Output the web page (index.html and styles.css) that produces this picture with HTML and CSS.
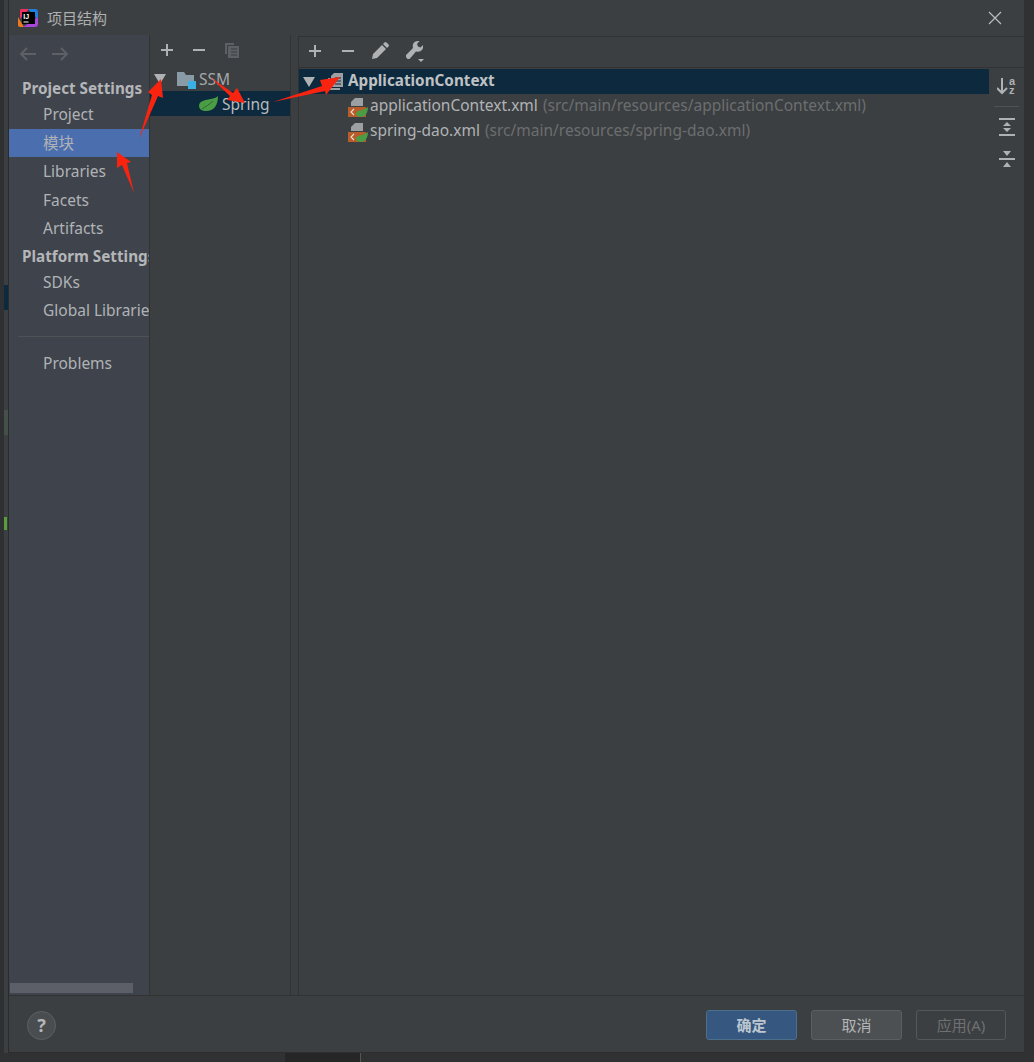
FILE: index.html
```html
<!DOCTYPE html>
<html lang="en">
<head>
    <meta charset="UTF-8">
    <title>项目结构</title>
    <link rel="stylesheet" href="styles.css">
</head>
<body>
    <!-- Editor behind the dialog, only its edges show -->
    <div class="edge-left">
        <span class="edge-mark edge-blue"></span>
        <span class="edge-mark edge-olive"></span>
        <span class="edge-mark edge-green"></span>
    </div>

    <div class="window">
        <div class="title-bar">
            <svg class="app-icon" width="20" height="20" viewBox="0 0 20 20">
                <path d="M3 1h8L2 11V3q0-2 1-2z" fill="#f2305f"/>
                <path d="M10 1h7q3 0 3 3v8z" fill="#1f7fe0"/>
                <path d="M0 9l6 10H2q-2 0-2-2z" fill="#f0781c"/>
                <path d="M5 19h12q3 0 3-3v-7z" fill="#a746d8"/>
                <rect x="4" y="4" width="13" height="12" fill="#000"/>
                <rect x="5.500" y="13.500" width="5" height="1" fill="#fff"/>
                <text x="5.300" y="11" class="logo-letters">IJ</text>
            </svg>
            <span class="title-text">项目结构</span>
            <svg class="close-icon" width="14" height="14" viewBox="0 0 14 14">
                <path d="M1 1l12 12M13 1L1 13" stroke="#bbbdbe" stroke-width="1.200" fill="none"/>
            </svg>
        </div>

        <div class="content">
            <!-- Left settings navigation -->
            <div class="sidebar">
                <div class="nav-arrows">
                    <svg width="18" height="14" viewBox="0 0 18 14"><path d="M17 7H2M8 1L2 7l6 6" stroke="#5d6165" stroke-width="2" fill="none"/></svg>
                    <svg width="18" height="14" viewBox="0 0 18 14"><path d="M1 7h15M10 1l6 6-6 6" stroke="#5d6165" stroke-width="2" fill="none"/></svg>
                </div>
                <div class="nav-head nav-head-first">Project Settings</div>
                <div class="nav-item nav-project">Project</div>
                <div class="nav-item nav-active">模块</div>
                <div class="nav-item">Libraries</div>
                <div class="nav-item">Facets</div>
                <div class="nav-item">Artifacts</div>
                <div class="nav-head">Platform Settings</div>
                <div class="nav-item nav-sdk">SDKs</div>
                <div class="nav-item">Global Libraries</div>
                <div class="nav-sep"></div>
                <div class="nav-item">Problems</div>
                <div class="side-scroll"></div>
            </div>

            <!-- Module tree -->
            <div class="module-panel">
                <div class="toolbar module-toolbar">
                    <svg width="14" height="14" viewBox="0 0 14 14"><path d="M7 1v12M1 7h12" stroke="#afb1b3" stroke-width="2"/></svg>
                    <svg width="14" height="14" viewBox="0 0 14 14"><path d="M1 7h12" stroke="#afb1b3" stroke-width="2"/></svg>
                    <svg class="copy-icon" width="16" height="16" viewBox="0 0 16 16"><path d="M1 1h9v2H3v9H1z" fill="#5d6165"/><path d="M4 4h11v12H4z" fill="#5d6165"/><path d="M7 7h6M7 10h6M7 13h6" stroke="#3c3f41" stroke-width="1.200"/></svg>
                </div>
                <div class="tree-row">
                    <svg class="tree-arrow" width="12" height="10" viewBox="0 0 12 10"><path d="M0 0h12L6 10z" fill="#afb1b3"/></svg>
                    <svg class="ssm-icon" width="20" height="18" viewBox="0 0 20 18"><path d="M1 1h7l2 3h8v11H1z" fill="#8a9ba8"/><rect x="12" y="10" width="8" height="8" fill="#3ab0e6"/></svg>
                    <span>SSM</span>
                </div>
                <div class="tree-row tree-selected">
                    <svg class="leaf-icon" width="19" height="15" viewBox="0 0 19 15"><path d="M19 0C19 9 15 15 7 15 3 15 0 13 0 10 0 4 8 4 12 3 15 2.500 17 2 19 0z" fill="#4a9c45"/><path d="M3 13C7 10 10 9 14 5" stroke="#2f6c32" stroke-width="1" fill="none"/></svg>
                    <span>Spring</span>
                </div>
            </div>

            <div class="splitter"></div>

            <!-- Spring context tree -->
            <div class="main-panel">
                <div class="toolbar main-toolbar">
                    <svg width="14" height="14" viewBox="0 0 14 14"><path d="M7 1v12M1 7h12" stroke="#afb1b3" stroke-width="2"/></svg>
                    <svg width="14" height="14" viewBox="0 0 14 14"><path d="M1 7h12" stroke="#afb1b3" stroke-width="2"/></svg>
                    <svg width="18" height="18" viewBox="0 0 18 18"><path d="M1 17l1-5L11 3l4 4-9 9zM12 2l1.500-1.500q1-1 2 0l2 2q1 1 0 2L16 6z" fill="#afb1b3"/></svg>
                    <svg class="wrench-icon" width="19" height="22" viewBox="0 0 19 22"><path d="M1 15l7-7Q7 4 9.500 2 12 .5 14.500 1L12 4l1 2.500 2.500 1L18 5q.5 2.500-1 5-2 2.500-6 1.500L5 18.500q-1.500 1-3 0T1 15z" fill="#afb1b3"/><path d="M13 19h6l-3 3z" fill="#afb1b3"/></svg>
                </div>
                <div class="main-body">
                    <div class="context-tree">
                        <div class="ctx-row ctx-selected">
                            <svg class="tree-arrow" width="12" height="10" viewBox="0 0 12 10"><path d="M0 0h12L6 10z" fill="#afb1b3"/></svg>
                            <svg class="stack-icon" width="16" height="18" viewBox="0 0 16 18"><path d="M7 0h9v14H4V3z" fill="#9da0a2"/><path d="M1 5h2v10h10v2H1z" fill="#9da0a2"/><path d="M8 5h6M8 8h6M8 11h6" stroke="#0d293e" stroke-width="1"/></svg>
                            <span class="ctx-name">ApplicationContext</span>
                        </div>
                        <div class="ctx-row ctx-file">
                            <svg class="xml-icon" width="20" height="20" viewBox="0 0 20 20">
                                <path d="M3 9V5l4-4h8v8z" fill="#9da0a2"/>
                                <rect x="0" y="10" width="18" height="10" fill="#b85c2a"/>
                                <path d="M6 12l-3 3 3 3" stroke="#e8e0d8" stroke-width="1.100" fill="none"/>
                                <path d="M20 10c0 6-3 10-7 10-3 0-5-1-5-3 0-4 7-3 12-7z" fill="#4a9c45"/>
                            </svg>
                            <span>applicationContext.xml</span>
                            <span class="ctx-path">(src/main/resources/applicationContext.xml)</span>
                        </div>
                        <div class="ctx-row ctx-file">
                            <svg class="xml-icon" width="20" height="20" viewBox="0 0 20 20">
                                <path d="M3 9V5l4-4h8v8z" fill="#9da0a2"/>
                                <rect x="0" y="10" width="18" height="10" fill="#b85c2a"/>
                                <path d="M6 12l-3 3 3 3" stroke="#e8e0d8" stroke-width="1.100" fill="none"/>
                                <path d="M20 10c0 6-3 10-7 10-3 0-5-1-5-3 0-4 7-3 12-7z" fill="#4a9c45"/>
                            </svg>
                            <span>spring-dao.xml</span>
                            <span class="ctx-path">(src/main/resources/spring-dao.xml)</span>
                        </div>
                    </div>
                    <div class="side-tools">
                        <svg class="sort-icon" width="20" height="18" viewBox="0 0 20 18"><path d="M5 1v15M0 11l5 5 5-5" stroke="#afb1b3" stroke-width="2" fill="none"/><text x="12" y="8" class="sort-letter">a</text><text x="12" y="17" class="sort-letter">z</text></svg>
                        <div class="tools-sep"></div>
                        <svg class="tool-expand" width="16" height="18" viewBox="0 0 16 18"><path d="M0 1h16M0 17h16" stroke="#afb1b3" stroke-width="2"/><path d="M8 4l4 4H4zM8 14l4-4H4z" fill="#afb1b3"/></svg>
                        <svg class="tool-collapse" width="16" height="16" viewBox="0 0 16 16"><path d="M0 8h16" stroke="#afb1b3" stroke-width="2"/><path d="M4 0h8L8 5zM4 16h8L8 11z" fill="#afb1b3"/></svg>
                    </div>
                </div>
            </div>
        </div>

        <div class="footer">
            <div class="help-btn">?</div>
            <div class="btn btn-primary">确定</div>
            <div class="btn">取消</div>
            <div class="btn btn-disabled">应用(A)</div>
        </div>
    </div>

    <div class="edge-right"></div>
    <div class="edge-bottom"><span class="edge-dark"></span></div>

    <!-- Red arrows drawn over the screenshot -->
    <svg class="arrows" width="1034" height="1062" viewBox="0 0 1034 1062">
        <g fill="#f9240f">
            <path d="M139 139L152 95 148 92 161 79 163 98 158 96z"/>
            <path d="M134 193L122 165 117 168 117 152 131 162 127 163z"/>
            <path d="M210 77L233 93 237 88 245 103 227 100 230 96z"/>
            <path d="M273 102L322 86 320 80 340 77 326 95 325 91z"/>
        </g>
    </svg>
</body>
</html>
```

FILE: styles.css
```css
/* Reset some default styles */
html, body {
    margin: 0;
    padding: 0;
}

body {
    width: 1034px;
    height: 1062px;
    overflow: hidden;
    position: relative;
    display: flex;
    flex-wrap: wrap;
    align-content: flex-start;
    background-color: #2b2b2b;
    color: #bbbbbb;
    font-family: "Noto Sans", "Noto Sans CJK SC", sans-serif;
    font-size: 15.500px;
}

/* Edges of the window behind */
.edge-left {
    width: 9px;
    height: 1053px;
    box-sizing: border-box;
    border-right: 1px solid #2b2b2b;
    border-left: 4px solid #2f3031;
    background-color: #3c3f41;
    display: flex;
    flex-direction: column;
}

.edge-mark {
    display: block;
    flex: none;
}

.edge-blue {
    height: 25px;
    margin-top: 285px;
    background-color: #0d293e;
}

.edge-olive {
    height: 25px;
    margin-top: 100px;
    background-color: #46504a;
}

.edge-green {
    height: 13px;
    margin-top: 82px;
    width: 3px;
    background-color: #5a9e3a;
}

.edge-right {
    width: 10px;
    height: 1053px;
    background-color: #2f3132;
}

.edge-bottom {
    width: 100%;
    height: 9px;
    background-color: #2f3132;
    padding-left: 285px;
    box-sizing: border-box;
}

.edge-dark {
    display: block;
    width: 75px;
    height: 9px;
    background-color: #262626;
    border-right: 1px solid #555;
}

/* Dialog window */
.window {
    width: 1015px;
    height: 1053px;
    display: flex;
    flex-direction: column;
    background-color: #3c3f41;
    border-bottom: 1px solid #2e2e2e;
    box-sizing: border-box;
}

.title-bar {
    height: 35px;
    flex: none;
    display: flex;
    align-items: center;
    padding-left: 9px;
    padding-right: 22px;
}

.logo-letters {
    font-family: "Liberation Sans", sans-serif;
    font-size: 7px;
    font-weight: 700;
    fill: #fff;
}

.title-text {
    margin-left: 9px;
    font-size: 15px;
    color: #aeb0b2;
}

.close-icon {
    margin-left: auto;
}

.content {
    flex: 1;
    display: flex;
    min-height: 0;
}

/* Settings navigation */
.sidebar {
    width: 140px;
    flex: none;
    background-color: #3f434c;
    overflow: hidden;
    position: relative;
    white-space: nowrap;
}

.nav-arrows {
    height: 37px;
    display: flex;
    align-items: center;
    gap: 14px;
    padding-left: 10px;
}

.nav-head {
    height: 26px;
    line-height: 26px;
    padding-left: 13px;
    font-size: 15.250px;
    font-weight: 700;
    color: #b4b6b8;
}

.nav-head-first {
    height: 28px;
    line-height: 32px;
}

.nav-item {
    height: 28.500px;
    line-height: 28.500px;
    padding-left: 34px;
    color: #b0b3b6;
}

.nav-project {
    height: 29px;
    line-height: 28px;
}

.nav-sdk {
    height: 27px;
    line-height: 27px;
}

.nav-active {
    height: 28px;
    line-height: 28px;
    background-color: #4b6eaf;
}

.nav-sep {
    height: 1px;
    margin: 12px 0 12px 9px;
    background-color: #4e5155;
}

.side-scroll {
    position: absolute;
    left: 1px;
    bottom: 2px;
    width: 123px;
    height: 10px;
    background-color: #5c5f68;
}

/* Module tree */
.module-panel {
    width: 140px;
    flex: none;
    border-left: 1px solid #323232;
    border-right: 1px solid #323232;
    box-sizing: content-box;
}

.toolbar {
    height: 30px;
    display: flex;
    align-items: center;
}

.module-toolbar {
    height: 30px;
    padding-bottom: 1px;
    gap: 18px;
    padding-left: 10px;
}

.tree-row {
    height: 25px;
    display: flex;
    align-items: center;
    color: #a4a7aa;
    position: relative;
}

.tree-arrow {
    margin-left: 4px;
    flex: none;
}

.ssm-icon {
    margin-left: 10px;
    margin-right: 3px;
    margin-top: 2px;
}

.tree-selected {
    background-color: #0d293e;
    padding-left: 48px;
    color: #b7babc;
}

.leaf-icon {
    margin-left: 1px;
    margin-right: 4px;
}

.splitter {
    width: 7px;
    flex: none;
}

/* Spring context panel */
.main-panel {
    flex: 1;
    min-width: 0;
    display: flex;
    flex-direction: column;
    border-left: 1px solid #323232;
    border-top: 1px solid #323232;
    margin-top: 1px;
}

.main-toolbar {
    height: 28px;
    padding-bottom: 2px;
    gap: 19px;
    padding-left: 9px;
    border-bottom: 1px solid #323232;
}

.main-toolbar svg:nth-child(3),
.main-toolbar svg:nth-child(4) {
    margin-left: -3px;
}

.main-body {
    flex: 1;
    display: flex;
    padding-top: 1px;
}

.context-tree {
    flex: 1;
}

.ctx-row {
    height: 25px;
    display: flex;
    align-items: center;
    white-space: nowrap;
    color: #b0b3b6;
}

.ctx-row span {
    margin-bottom: 4px;
}

.ctx-selected {
    background-color: #0d293e;
}

.stack-icon {
    margin-left: 12px;
    margin-right: 5px;
}

.ctx-name {
    font-size: 15.250px;
    font-weight: 700;
    color: #bfc1c3;
}

.ctx-file {
    padding-left: 49px;
}

.xml-icon {
    margin-right: 2px;
    flex: none;
}

.ctx-row .ctx-path {
    margin-left: 5px;
    color: #6b6e70;
}

.side-tools {
    width: 35px;
    flex: none;
    display: flex;
    flex-direction: column;
    align-items: center;
    padding-top: 8px;
}

.sort-letter {
    font-family: "Liberation Sans", sans-serif;
    font-size: 11px;
    font-weight: 700;
    fill: #afb1b3;
}

.tools-sep {
    width: 25px;
    height: 1px;
    background-color: #505355;
    margin-top: 11px;
}

.tool-expand {
    margin-top: 11px;
}

.tool-collapse {
    margin-top: 15px;
}

/* Dialog buttons */
.footer {
    height: 57px;
    flex: none;
    display: flex;
    align-items: center;
    padding-left: 18px;
    padding-right: 18px;
    padding-top: 2px;
    box-sizing: border-box;
    border-top: 1px solid #323232;
}

.help-btn {
    width: 29px;
    height: 29px;
    box-sizing: border-box;
    border-radius: 50%;
    border: 1px solid #5e6060;
    background-color: #4a4d4f;
    text-align: center;
    line-height: 27px;
    font-weight: 700;
    font-size: 18px;
    color: #b4b6b8;
    margin-right: auto;
}

.btn {
    width: 91px;
    height: 30px;
    box-sizing: border-box;
    border: 1px solid #5c5f60;
    border-radius: 3px;
    background-color: #4c5052;
    text-align: center;
    line-height: 28px;
    font-size: 15px;
    color: #b4b6b8;
    margin-left: 14px;
}

.btn-primary {
    background-color: #365880;
    border-color: #4c708c;
    color: #bcc6d0;
    font-weight: 700;
}

.btn-disabled {
    width: 90px;
    background-color: #3c3f41;
    border-color: #55585a;
    color: #6e7072;
}

/* Annotation layer */
.arrows {
    position: absolute;
    left: 0;
    top: 0;
    pointer-events: none;
}
```
